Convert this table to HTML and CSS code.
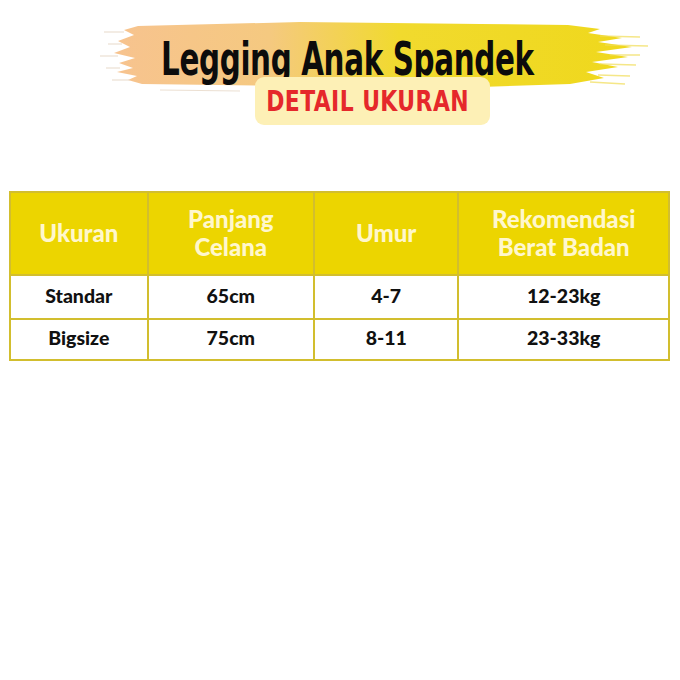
FILE: index.html
```html
<!DOCTYPE html>
<html>
<head>
<meta charset="utf-8">
<link rel="stylesheet" href="styles.css">
</head>
<body>
<div class="page">
  <header class="hero">
    <svg class="brush" viewBox="0 0 680 110" width="680" height="110" aria-hidden="true">
      <defs>
        <linearGradient id="bg" x1="0" x2="1" y1="0" y2="0">
          <stop offset="0" stop-color="#F7C38F"/>
          <stop offset="0.3" stop-color="#F5C980"/>
          <stop offset="0.55" stop-color="#F1DA2E"/>
          <stop offset="1" stop-color="#EFD81C"/>
        </linearGradient>
      </defs>
      <path fill="url(#bg)" d="M138,26 L300,22 L480,24 L568,25 L600,29 L588,33 L622,38 L598,42 L632,47 L596,52 L628,57 L592,62 L618,67 L586,72 L604,78 L570,84 L480,87 L300,86 L142,84 L128,80 L137,76 L117,72 L133,68 L119,63 L135,58 L114,53 L130,47 L118,41 L134,35 L124,30 Z"/>
      <g stroke="#F2DD55" stroke-width="1.5" opacity="0.7">
        <line x1="600" y1="36" x2="640" y2="37"/>
        <line x1="605" y1="45" x2="648" y2="46"/>
        <line x1="610" y1="55" x2="640" y2="55"/>
        <line x1="600" y1="64" x2="636" y2="65"/>
        <line x1="598" y1="75" x2="630" y2="76"/>
        <line x1="590" y1="82" x2="625" y2="84"/>
      </g>
      <g stroke="#E8D9C8" stroke-width="1.2" opacity="0.8">
        <line x1="104" y1="32" x2="124" y2="32"/>
        <line x1="108" y1="44" x2="122" y2="44"/>
        <line x1="100" y1="56" x2="118" y2="56"/>
        <line x1="106" y1="68" x2="120" y2="68"/>
        <line x1="112" y1="80" x2="130" y2="80"/>
        <line x1="160" y1="90" x2="240" y2="91"/>
      </g>
    </svg>
    <h1 class="title"><span class="title-text">Legging Anak Spandek</span></h1>
    <div class="badge"><span class="badge-text">DETAIL UKURAN</span></div>
  </header>

  <table class="size-table">
    <colgroup>
      <col class="c1"><col class="c2"><col class="c3"><col class="c4">
    </colgroup>
    <thead>
      <tr>
        <th>Ukuran</th>
        <th>Panjang<br>Celana</th>
        <th>Umur</th>
        <th>Rekomendasi<br>Berat Badan</th>
      </tr>
    </thead>
    <tbody>
      <tr class="r1">
        <td>Standar</td>
        <td>65cm</td>
        <td>4-7</td>
        <td>12-23kg</td>
      </tr>
      <tr class="r2">
        <td>Bigsize</td>
        <td>75cm</td>
        <td>8-11</td>
        <td>23-33kg</td>
      </tr>
    </tbody>
  </table>
</div>
</body>
</html>
```

FILE: styles.css
```css
html, body {
  margin: 0;
  padding: 0;
  background: #ffffff;
}

.page {
  width: 680px;
  height: 680px;
  overflow: hidden;
}

.hero {
  position: relative;
  display: flex;
  flex-direction: column;
  align-items: center;
  padding-top: 36px;
}

.brush {
  position: absolute;
  top: 0;
  left: 0;
}

.title {
  position: relative;
  margin: 0 0 0 14px;
  height: 46px;
  width: 380px;
  display: flex;
  justify-content: center;
  font-family: "DejaVu Sans", sans-serif;
  font-stretch: condensed;
  font-weight: 700;
  font-size: 46px;
  line-height: 46px;
  color: #0c0c0c;
  white-space: nowrap;
}

.title-text {
  display: inline-block;
  transform: scaleX(0.71);
  letter-spacing: -0.5px;
}

.badge {
  position: relative;
  margin: -5px 0 0 64px;
  width: 235px;
  height: 48px;
  padding-right: 9px;
  box-sizing: border-box;
  border-radius: 9px;
  background: #FDF0B6;
  display: flex;
  align-items: center;
  justify-content: center;
  font-family: "DejaVu Sans", sans-serif;
  font-stretch: condensed;
  font-weight: 700;
  font-size: 28px;
  color: #E5282B;
  white-space: nowrap;
}

.badge-text {
  display: inline-block;
  transform: scaleX(0.87);
  letter-spacing: 0.5px;
}

.size-table {
  margin: 66px 0 0 9px;
  width: 661px;
  border-collapse: collapse;
  font-family: Lato, "Open Sans", sans-serif;
  text-align: center;
}

.c1 { width: 138px; }
.c2 { width: 167px; }
.c3 { width: 145px; }
.c4 { width: 211px; }

.size-table th,
.size-table td {
  border: 2px solid #D2BE2E;
  padding: 0;
}

.size-table th {
  height: 79px;
  padding-bottom: 2px;
  background: #ECD500;
  color: #FFF7CC;
  font-weight: 900;
  font-size: 24px;
  line-height: 28px;
}

.size-table td {
  color: #111111;
  font-weight: 900;
  font-size: 19.5px;
  padding-bottom: 4px;
}

.r1 td { height: 38px; }
.r2 td { height: 35px; }
```
